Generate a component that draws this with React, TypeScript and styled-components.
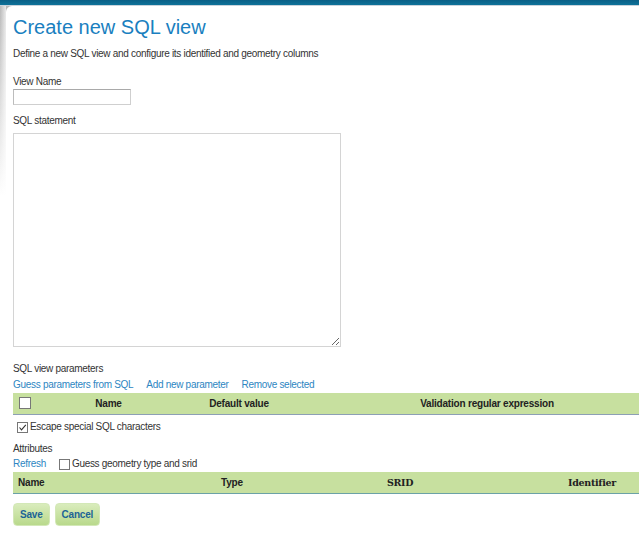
import styled, { createGlobalStyle } from "styled-components";

const GlobalStyle = createGlobalStyle`
  html, body {
    margin: 0;
    padding: 0;
    background: #fff;
    overflow: hidden;
  }
  body {
    font-family: "Liberation Sans", Arial, sans-serif;
    font-size: 10px;
    letter-spacing: -0.3px;
    color: #333;
  }
`;

const TopBar = styled.div`
  height: 5px;
  background: linear-gradient(to bottom, #0a5f86, #0e7299);
  border-bottom: 1px solid #c9d3dc;
`;

const Body = styled.div`
  display: flex;
  min-height: 536px;
  background: linear-gradient(to bottom, #b9b9b9 0px, #e6e6e6 120px, #fff 190px);
`;

const Gutter = styled.div`
  width: 6px;
  flex: none;
  background: linear-gradient(to right, transparent, rgba(255, 255, 255, 0.7));
`;

const Panel = styled.div`
  flex: 1;
  min-width: 0;
  background: #fff;
  border-top-left-radius: 6px;
  padding: 8px 0 12px 7px;
  overflow: hidden;
`;

const Title = styled.h1`
  margin: 0;
  font-weight: normal;
  font-size: 20px;
  letter-spacing: 0;
  line-height: 26px;
  color: #1a7fc0;
`;

const Lead = styled.p`
  margin: 7px 0 0;
  line-height: 14px;
`;

const Label = styled.div<{ $gap: number }>`
  margin-top: ${(p) => p.$gap}px;
  line-height: 14px;
  color: #333;
`;

const TextInput = styled.input`
  display: block;
  margin-top: 0;
  width: 118px;
  height: 16px;
  box-sizing: border-box;
  border: 1px solid #cfcfcf;
  border-top-color: #a9a9a9;
  border-left-color: #bcbcbc;
  padding: 0 2px;
`;

const SqlArea = styled.textarea`
  display: block;
  margin-top: 5px;
  width: 328px;
  height: 214px;
  box-sizing: border-box;
  border: 1px solid #d4d4d4;
  resize: both;
`;

const LinkRow = styled.div<{ $gap: number }>`
  display: flex;
  align-items: center;
  gap: 13px;
  margin-top: ${(p) => p.$gap}px;
  line-height: 14px;
`;

const Link = styled.a`
  color: #2d86c2;
  text-decoration: none;
  cursor: pointer;
`;

const CheckLabel = styled.label`
  display: flex;
  align-items: center;
  gap: 2px;
  color: #333;
`;

const Box = styled.span<{ $size: number }>`
  display: inline-flex;
  align-items: center;
  justify-content: center;
  width: ${(p) => p.$size}px;
  height: ${(p) => p.$size}px;
  border: 1px solid #777;
  background: #fff;
  box-sizing: content-box;
`;

const Grid = styled.table`
  width: 663px;
  table-layout: fixed;
  border-collapse: collapse;
  margin-top: 1px;
`;

const HeadRow = styled.tr<{ $line: string }>`
  background: #c7e09f;
  border-bottom: 1px solid ${(p) => p.$line};
`;

const Th = styled.th<{ $align?: string; $serif?: boolean; $w?: number }>`
  height: 21px;
  padding: 0 5px;
  font-weight: bold;
  color: #222;
  text-align: ${(p) => p.$align || "center"};
  width: ${(p) => (p.$w ? `${p.$w}px` : "auto")};
  font-family: ${(p) =>
    p.$serif ? '"DejaVu Serif", "Liberation Serif", serif' : "inherit"};
  font-size: ${(p) => (p.$serif ? "9.5px" : "10px")};
  letter-spacing: ${(p) => (p.$serif ? "-0.3px" : "-0.2px")};
`;

const Options = styled.div`
  margin-top: 5px;
  padding-left: 4px;
  line-height: 14px;
`;

const Buttons = styled.div`
  display: flex;
  gap: 5px;
  margin-top: 9px;
`;

const Button = styled.button`
  height: 23px;
  padding: 0 6px;
  border: 1px solid #d3e8b7;
  border-radius: 4px;
  background: linear-gradient(to bottom, #d9ecbc, #b9d98c);
  color: #1c6496;
  font-family: "Liberation Sans", Arial, sans-serif;
  font-weight: bold;
  font-size: 10px;
  letter-spacing: -0.2px;
  cursor: pointer;
`;

function Check({ checked, size = 9 }: { checked?: boolean; size?: number }) {
  return (
    <Box $size={size}>
      {checked && (
        <svg width="9" height="9" viewBox="0 0 9 9">
          <path d="M1.5 4.5 L3.5 6.8 L7.8 1.8" fill="none" stroke="#333" strokeWidth="1.1" />
        </svg>
      )}
    </Box>
  );
}

export default function App() {
  return (
    <>
      <GlobalStyle />
      <TopBar />
      <Body>
        <Gutter />
        <Panel>
          <Title>Create new SQL view</Title>
          <Lead>Define a new SQL view and configure its identified and geometry columns</Lead>

          <Label $gap={14}>View Name</Label>
          <TextInput type="text" />

          <Label $gap={9}>SQL statement</Label>
          <SqlArea />

          <Label $gap={15}>SQL view parameters</Label>
          <LinkRow $gap={2}>
            <Link>Guess parameters from SQL</Link>
            <Link>Add new parameter</Link>
            <Link>Remove selected</Link>
          </LinkRow>
          <Grid>
            <thead>
              <HeadRow $line="#8d9fb5">
                <Th $w={14}>
                  <Check size={10} />
                </Th>
                <Th $w={133}>Name</Th>
                <Th $w={108}>Default value</Th>
                <Th>Validation regular expression</Th>
              </HeadRow>
            </thead>
          </Grid>
          <Options>
            <CheckLabel>
              <Check checked />
              Escape special SQL characters
            </CheckLabel>
          </Options>

          <Label $gap={8}>Attributes</Label>
          <LinkRow $gap={1}>
            <Link>Refresh</Link>
            <CheckLabel>
              <Check />
              Guess geometry type and srid
            </CheckLabel>
          </LinkRow>
          <Grid>
            <thead>
              <HeadRow $line="#6ba2a6">
                <Th $align="left" $w={149}>Name</Th>
                <Th $w={110}>Type</Th>
                <Th $serif $w={206}>SRID</Th>
                <Th $serif>Identifier</Th>
              </HeadRow>
            </thead>
          </Grid>

          <Buttons>
            <Button>Save</Button>
            <Button>Cancel</Button>
          </Buttons>
        </Panel>
      </Body>
    </>
  );
}
